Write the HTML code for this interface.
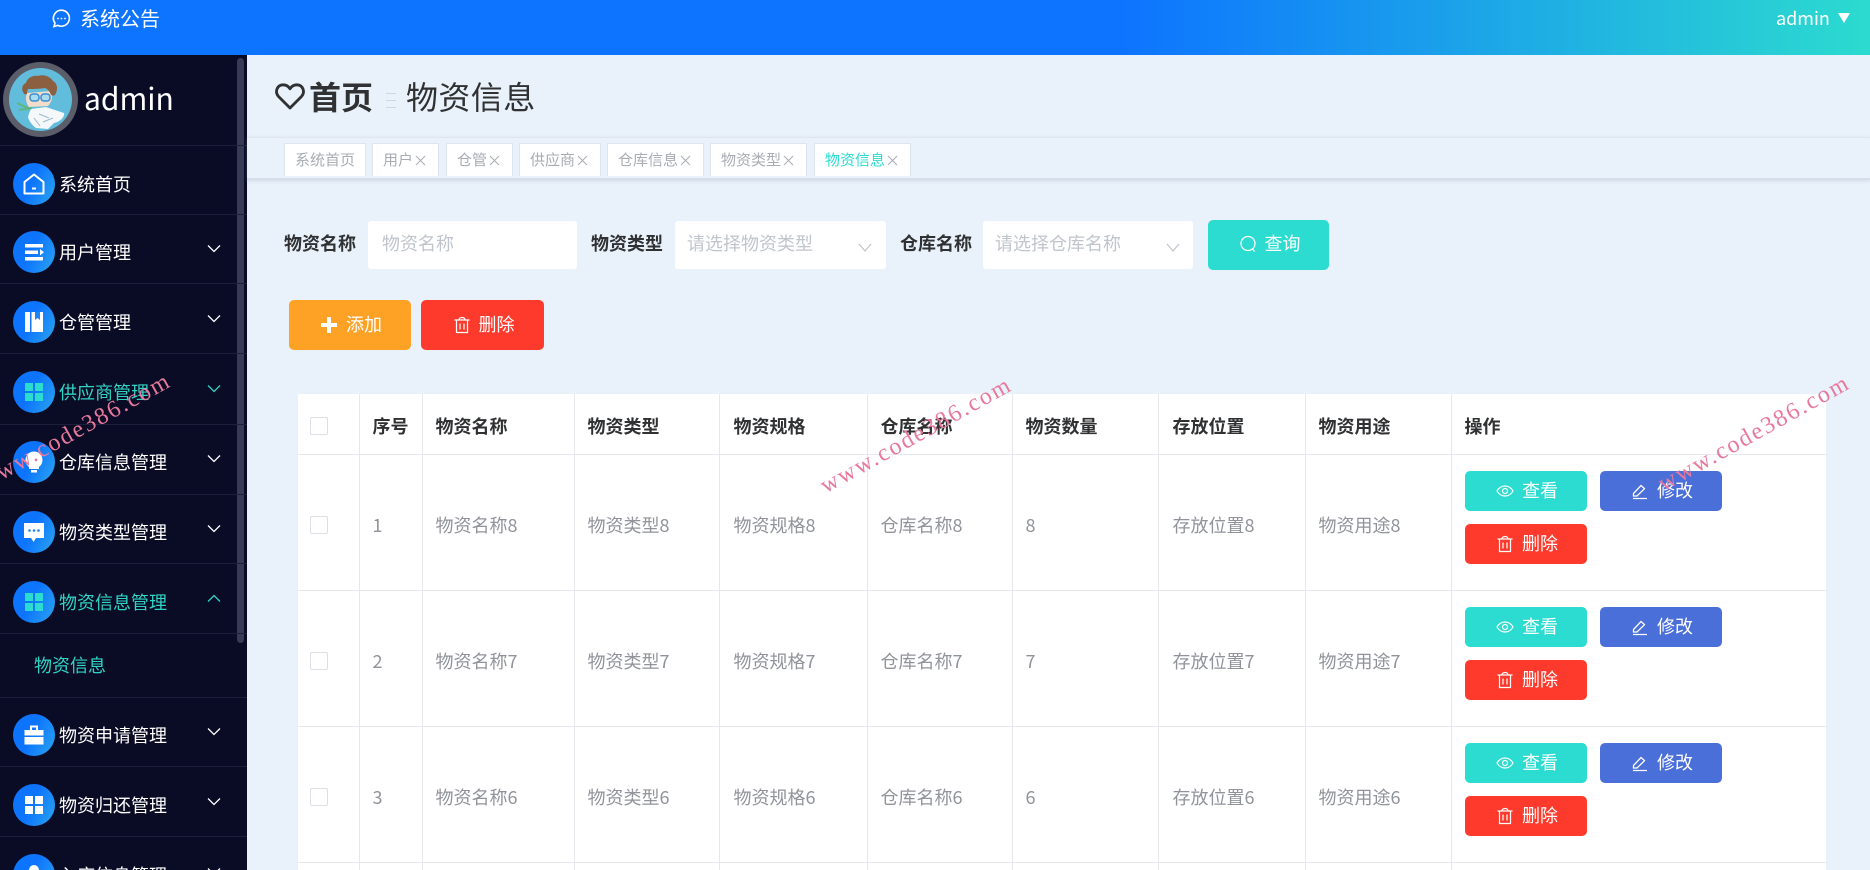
<!DOCTYPE html>
<html lang="zh"><head><meta charset="utf-8"><title>物资信息</title>
<style>
*{box-sizing:border-box}
html,body{margin:0;padding:0;width:1870px;height:870px;overflow:hidden;background:#e9f1fa;font-family:"Noto Sans CJK SC","Liberation Sans",sans-serif}
#page{position:absolute;left:0;top:0;width:1870px;height:870px;overflow:hidden;background:#e9f1fa}
.t{position:absolute;white-space:nowrap;line-height:1}
.a{position:absolute}
#hd{position:absolute;left:0;top:0;width:1870px;height:55px;background:linear-gradient(90deg,#0d74ff 60%,#2cdbcf 100%)}
#sb{position:absolute;left:0;top:55px;width:247px;height:815px;background:#0a0c26;overflow:hidden}
.dv{position:absolute;left:0;width:247px;height:1px;background:#1d1f3c}
.ic{position:absolute;left:13px;width:42px;height:42px;border-radius:50%;background:linear-gradient(115deg,#0d74ff 45%,#2ba6ee 100%)}
.ic svg{position:absolute;left:9px;top:9px;width:24px;height:24px}
.ml{position:absolute;left:59px;font-size:18px;line-height:24px;color:#fff;white-space:nowrap}
.ch{position:absolute;left:207px;width:14px;height:9px}
.on{color:#2fd4c4}
.tag{position:absolute;top:143px;height:33px;background:#fff;border:1px solid #dfe5ee;border-bottom:none;font-size:15px;line-height:31px;color:#a9adb3;padding-left:10px;white-space:nowrap}
.tag svg{display:inline-block;width:11px;height:11px;margin-left:2px;vertical-align:-1px;fill:none;stroke:#a9adb3;stroke-width:1}
.lb{position:absolute;font-size:18px;font-weight:700;line-height:24px;color:#303133;white-space:nowrap}
.in{position:absolute;background:#fff;height:48px;border-radius:3px;font-size:18px;line-height:44px;color:#c0c4cc;white-space:nowrap}
.btn{position:absolute;display:flex;align-items:center;justify-content:center;color:#fff;font-size:18px;border-radius:5px;white-space:nowrap;padding-left:2px}
.btn span{margin-left:8px;position:relative;top:-1px}
.btn svg{width:18px;height:18px;display:block}
.g{background:#2cdcd0}.b{background:#4a6fd8}.r{background:#fe3a2c}.o{background:#fea226}
table{position:absolute;left:298px;top:394px;width:1528px;border-collapse:collapse;table-layout:fixed;background:#fff}
th,td{border:1px solid #e6e8ee;padding:0 13px;font-size:18px;text-align:left;white-space:nowrap;overflow:hidden}
table tr>*:first-child{border-left:none;padding-left:12px}
table tr>*:last-child{border-right:none}
table tr>*:nth-child(5),table tr>*:nth-child(8){padding-left:14px}
tr:first-child th{border-top:none}
th{height:60px;color:#303133;font-weight:700;padding-top:4px}
td{height:136px;color:#909399;padding-top:5px}
tr.last td{height:8px;padding:0;border-bottom:none;font-size:0;line-height:0}
.cb{display:block;width:18px;height:18px;border:1px solid #dcdfe6;background:#fff;border-radius:2px}
.wm{position:absolute;font-family:"Liberation Serif",serif;font-size:24px;letter-spacing:2px;color:#e7799d;line-height:1;white-space:nowrap;transform:rotate(-29deg);transform-origin:0 100%}
</style></head><body><div id="page">

<div id="hd">
<svg class="a" style="left:52px;top:9px" width="19" height="19" viewBox="0 0 19 19" fill="none" stroke="#fff" stroke-width="1.6"><path d="M9.5 1.2a8 8 0 1 1-3.6 15.2L2 17.6l1-3.6A8 8 0 0 1 9.500 1.200z"/><circle cx="6" cy="9.500" r=".9" fill="#fff" stroke="none"/><circle cx="9.500" cy="9.500" r=".9" fill="#fff" stroke="none"/><circle cx="13" cy="9.500" r=".9" fill="#fff" stroke="none"/></svg>
<div class="t" style="left:80px;top:8px;font-size:20px;color:#fff;line-height:20px">系统公告</div>
<div class="t" style="left:1776px;top:9px;font-size:18px;color:#fff;line-height:18px">admin</div>
<svg class="a" style="left:1838px;top:13px" width="12" height="10" viewBox="0 0 12 10"><path d="M0 0h12L6 10z" fill="#fff"/></svg>
</div>

<div id="sb">
<div class="a" style="left:237px;top:3px;width:7px;height:585px;background:#393a55;border-radius:4px"></div>
<svg class="a" style="left:3px;top:7px" width="75" height="75" viewBox="0 0 75 75">
<circle cx="37.500" cy="37.500" r="37.500" fill="#5b5d68"/><circle cx="37.500" cy="37.500" r="31.500" fill="#62bcdc"/>
<path d="M26 45c-3-4-4-9-2-14l24-2c2 5 1 11-3 15z" fill="#f3dcc9"/>
<path d="M20 30c-2-4 0-8 3-9 1-5 7-8 12-7 5-2 12 0 15 5 4 2 5 7 3 12-1 3-3 3-5 2-1-3-3-6-6-7-6 1-13 1-17 1-1 2-1 4-1 5-2 1-3 0-4-2z" fill="#8b5f3f"/>
<rect x="27" y="32" width="9" height="7" rx="3" fill="#a8dcf2" stroke="#3b8fd0" stroke-width="1.500"/><rect x="38" y="32" width="9" height="7" rx="3" fill="#a8dcf2" stroke="#3b8fd0" stroke-width="1.500"/>
<path d="M28 47l15-2 18 6c1 4-4 9-10 10l-6 6-12-1c-4-3-7-7-8-11 1-4 2-6 3-8z" fill="#f4f8fa"/>
<path d="M36 52l10 4M40 60l10-4M31 56l6 8" stroke="#9fb9c8" stroke-width="1"/>
<path d="M14 41l13 6M16 48l13-2" stroke="#5fb87a" stroke-width="2"/>
</svg>
<div class="t" style="left:84px;top:24px;font-size:30px;color:#fff;line-height:36px">admin</div>
<div class="dv" style="top:90px"></div>

<div class="ic" style="top:108px"><svg viewBox="0 0 24 24" fill="none" stroke="#fff" stroke-width="2"><path d="M12 2.500 21.500 10v11.500h-19V10z" stroke-linejoin="round"/><path d="M10 16.500h4"/></svg></div>
<div class="ml" style="top:117px">系统首页</div>
<div class="dv" style="top:159px"></div>

<div class="ic" style="top:176px"><svg viewBox="0 0 24 24" fill="#fff"><rect x="3" y="4" width="18" height="3.500"/><rect x="3" y="10.500" width="13" height="3.500"/><rect x="3" y="17" width="18" height="3.500"/><path d="M18 9l4 3.200-4 3.200z"/></svg></div>
<div class="ml" style="top:185px">用户管理</div>
<svg class="ch" style="top:189px" viewBox="0 0 14 9" fill="none" stroke="#fff" stroke-width="1.300"><path d="M1 1.500l6 6 6-6"/></svg>
<div class="dv" style="top:228px"></div>

<div class="ic" style="top:246px"><svg viewBox="0 0 24 24" fill="#fff"><path d="M3 2h5v20H3zM9.500 2H21v20H9.500z"/><path d="M13 2h5v8l-2.500-2L13 10z" fill="#1b84fa"/></svg></div>
<div class="ml" style="top:255px">仓管管理</div>
<svg class="ch" style="top:259px" viewBox="0 0 14 9" fill="none" stroke="#fff" stroke-width="1.300"><path d="M1 1.500l6 6 6-6"/></svg>
<div class="dv" style="top:298px"></div>

<div class="ic" style="top:316px"><svg viewBox="0 0 24 24" fill="#2cdcd0"><rect x="3" y="3" width="8" height="8"/><rect x="13" y="3" width="8" height="8"/><rect x="3" y="13" width="8" height="8"/><rect x="13" y="13" width="8" height="8"/></svg></div>
<div class="ml on" style="top:325px">供应商管理</div>
<svg class="ch" style="top:329px" viewBox="0 0 14 9" fill="none" stroke="#2fd4c4" stroke-width="1.300"><path d="M1 1.500l6 6 6-6"/></svg>
<div class="dv" style="top:369px"></div>

<div class="ic" style="top:386px"><svg viewBox="0 0 24 24" fill="#fff"><path d="M12 1.500a8.500 8.500 0 0 1 5 15.400V19H7v-2.100A8.500 8.500 0 0 1 12 1.500z"/><rect x="9" y="20" width="6" height="2.500"/></svg></div>
<div class="ml" style="top:395px">仓库信息管理</div>
<svg class="ch" style="top:399px" viewBox="0 0 14 9" fill="none" stroke="#fff" stroke-width="1.300"><path d="M1 1.500l6 6 6-6"/></svg>
<div class="dv" style="top:439px"></div>

<div class="ic" style="top:456px"><svg viewBox="0 0 24 24"><path d="M2 3h20v15h-8l-2.500 4-2.500-4H2z" fill="#fff"/><circle cx="7.500" cy="10.500" r="1.300" fill="#1b84fa"/><circle cx="12" cy="10.500" r="1.300" fill="#1b84fa"/><circle cx="16.500" cy="10.500" r="1.300" fill="#1b84fa"/></svg></div>
<div class="ml" style="top:465px">物资类型管理</div>
<svg class="ch" style="top:469px" viewBox="0 0 14 9" fill="none" stroke="#fff" stroke-width="1.300"><path d="M1 1.500l6 6 6-6"/></svg>
<div class="dv" style="top:508px"></div>

<div class="ic" style="top:526px"><svg viewBox="0 0 24 24" fill="#2cdcd0"><rect x="3" y="3" width="8" height="8"/><rect x="13" y="3" width="8" height="8"/><rect x="3" y="13" width="8" height="8"/><rect x="13" y="13" width="8" height="8"/></svg></div>
<div class="ml on" style="top:535px">物资信息管理</div>
<svg class="ch" style="top:539px" viewBox="0 0 14 9" fill="none" stroke="#2fd4c4" stroke-width="1.300"><path d="M1 7.500l6-6 6 6"/></svg>
<div class="dv" style="top:578px"></div>
<div class="ml on" style="left:34px;top:598px">物资信息</div>
<div class="dv" style="top:642px"></div>

<div class="ic" style="top:659px"><svg viewBox="0 0 24 24" fill="#fff"><path d="M8 2.500h8V7h-2V4.500h-4V7H8z"/><path d="M2.500 7h19v5.500h-19zM2.500 14h19v7.500h-19z"/></svg></div>
<div class="ml" style="top:668px">物资申请管理</div>
<svg class="ch" style="top:672px" viewBox="0 0 14 9" fill="none" stroke="#fff" stroke-width="1.300"><path d="M1 1.500l6 6 6-6"/></svg>
<div class="dv" style="top:711px"></div>

<div class="ic" style="top:729px"><svg viewBox="0 0 24 24" fill="#fff"><rect x="3" y="3" width="8" height="8"/><rect x="13" y="3" width="8" height="8"/><rect x="3" y="13" width="8" height="8"/><rect x="13" y="13" width="8" height="8"/></svg></div>
<div class="ml" style="top:738px">物资归还管理</div>
<svg class="ch" style="top:742px" viewBox="0 0 14 9" fill="none" stroke="#fff" stroke-width="1.300"><path d="M1 1.500l6 6 6-6"/></svg>
<div class="dv" style="top:781px"></div>

<div class="ic" style="top:799px"><svg viewBox="0 0 24 24" fill="#fff"><circle cx="12" cy="7" r="5"/><path d="M3 22c0-6 4-8 9-8s9 2 9 8z"/></svg></div>
<div class="ml" style="top:808px">入库信息管理</div>
<svg class="ch" style="top:812px" viewBox="0 0 14 9" fill="none" stroke="#fff" stroke-width="1.300"><path d="M1 1.500l6 6 6-6"/></svg>
</div>

<!-- content -->
<svg class="a" style="left:275px;top:83px" width="30" height="27" viewBox="0 0 30 27" fill="none" stroke="#303133" stroke-width="2.800"><path d="M15 25 3.500 13.500C-.5 9 2 2 8 1.800c3 0 5.500 1.500 7 4 1.500-2.500 4-4 7-4C28 2 30.500 9 26.500 13.500z" stroke-linejoin="round"/></svg>
<div class="t" style="left:309px;top:78px;font-size:32px;font-weight:700;color:#303133;line-height:36px">首页</div>
<div class="a" style="left:386px;top:93px;width:10px;height:1px;background:#cfd6df"></div>
<div class="a" style="left:386px;top:100px;width:10px;height:1px;background:#cfd6df"></div>
<div class="a" style="left:386px;top:107px;width:10px;height:1px;background:#cfd6df"></div>
<div class="t" style="left:406px;top:78px;font-size:32px;color:#303133;line-height:36px;letter-spacing:.4px">物资信息</div>

<div class="a" style="left:247px;top:137px;width:1623px;height:43px;border-top:1px solid #dfe6ef;border-bottom:2px solid #d6dee9;box-shadow:0 1px 3px rgba(150,165,190,.3)"></div>
<div class="tag" style="left:284px;width:82px">系统首页</div>
<div class="tag" style="left:372px;width:67px">用户<svg viewBox="0 0 11 11"><path d="M1 1l9 9M10 1l-9 9"/></svg></div>
<div class="tag" style="left:446px;width:67px">仓管<svg viewBox="0 0 11 11"><path d="M1 1l9 9M10 1l-9 9"/></svg></div>
<div class="tag" style="left:519px;width:82px">供应商<svg viewBox="0 0 11 11"><path d="M1 1l9 9M10 1l-9 9"/></svg></div>
<div class="tag" style="left:607px;width:97px">仓库信息<svg viewBox="0 0 11 11"><path d="M1 1l9 9M10 1l-9 9"/></svg></div>
<div class="tag" style="left:710px;width:97px">物资类型<svg viewBox="0 0 11 11"><path d="M1 1l9 9M10 1l-9 9"/></svg></div>
<div class="tag" style="left:814px;width:97px"><span style="color:#2cdcd0">物资信息</span><svg viewBox="0 0 11 11"><path d="M1 1l9 9M10 1l-9 9"/></svg></div>

<div class="lb" style="left:284px;top:231px">物资名称</div>
<div class="in" style="left:368px;top:221px;width:209px;padding-left:14px">物资名称</div>
<div class="lb" style="left:591px;top:231px">物资类型</div>
<div class="in" style="left:675px;top:221px;width:211px;padding-left:12px">请选择物资类型</div>
<svg class="a" style="left:858px;top:243px" width="14" height="9" viewBox="0 0 14 9" fill="none" stroke="#c0c4cc" stroke-width="1.200"><path d="M1 1l6 7 6-7"/></svg>
<div class="lb" style="left:900px;top:231px">仓库名称</div>
<div class="in" style="left:983px;top:221px;width:210px;padding-left:12px">请选择仓库名称</div>
<svg class="a" style="left:1166px;top:243px" width="14" height="9" viewBox="0 0 14 9" fill="none" stroke="#c0c4cc" stroke-width="1.200"><path d="M1 1l6 7 6-7"/></svg>
<div class="btn g" style="left:1208px;top:220px;width:121px;height:50px"><svg style="margin-top:-3px" viewBox="0 0 18 18" fill="none" stroke="#fff" stroke-width="1.300"><circle cx="9" cy="8.500" r="7"/><path d="M13.500 14l2 2.500"/></svg><span style="top:-2px">查询</span></div>
<div class="btn o" style="left:289px;top:300px;width:122px;height:50px"><svg viewBox="0 0 18 18" fill="#fff"><path d="M7 1h4v6h6v4h-6v6H7v-6H1V7h6z"/></svg><span>添加</span></div>
<div class="btn r" style="left:421px;top:300px;width:123px;height:50px"><svg viewBox="0 0 18 18" fill="none" stroke="#fff" stroke-width="1.200"><path d="M1.500 4h15M6 4c0-1.600 1-2.500 3-2.500S12 2.400 12 4M3.500 4v12.500h11V4M7 7.500v6M11 7.500v6"/></svg><span>删除</span></div>

<table>
<colgroup><col style="width:61px"><col style="width:63px"><col style="width:152px"><col style="width:145px"><col style="width:148px"><col style="width:145px"><col style="width:146px"><col style="width:147px"><col style="width:146px"><col></colgroup>
<tr><th><span class="cb"></span></th><th>序号</th><th>物资名称</th><th>物资类型</th><th>物资规格</th><th>仓库名称</th><th>物资数量</th><th>存放位置</th><th>物资用途</th><th>操作</th></tr>
<tr><td><span class="cb"></span></td><td>1</td><td>物资名称8</td><td>物资类型8</td><td>物资规格8</td><td>仓库名称8</td><td>8</td><td>存放位置8</td><td>物资用途8</td><td></td></tr>
<tr><td><span class="cb"></span></td><td>2</td><td>物资名称7</td><td>物资类型7</td><td>物资规格7</td><td>仓库名称7</td><td>7</td><td>存放位置7</td><td>物资用途7</td><td></td></tr>
<tr><td><span class="cb"></span></td><td>3</td><td>物资名称6</td><td>物资类型6</td><td>物资规格6</td><td>仓库名称6</td><td>6</td><td>存放位置6</td><td>物资用途6</td><td></td></tr>
<tr class="last"><td></td><td></td><td></td><td></td><td></td><td></td><td></td><td></td><td></td><td></td></tr>
</table>

<div class="btn g" style="left:1465px;top:471px;width:122px;height:40px"><svg viewBox="0 0 18 18" fill="none" stroke="#fff" stroke-width="1.200"><path d="M1 9c2-3.500 5-5 8-5s6 1.500 8 5c-2 3.500-5 5-8 5s-6-1.500-8-5z"/><circle cx="9" cy="9" r="2.500"/></svg><span>查看</span></div>
<div class="btn b" style="left:1600px;top:471px;width:122px;height:40px"><svg viewBox="0 0 18 18" fill="none" stroke="#fff" stroke-width="1.300"><path d="M2.500 11.500 10 3.500l3.500 3.200L6 14H2.500zM2 16.500h14"/></svg><span>修改</span></div>
<div class="btn r" style="left:1465px;top:524px;width:122px;height:40px"><svg viewBox="0 0 18 18" fill="none" stroke="#fff" stroke-width="1.200"><path d="M1.500 4h15M6 4c0-1.600 1-2.500 3-2.500S12 2.400 12 4M3.500 4v12.500h11V4M7 7.500v6M11 7.500v6"/></svg><span>删除</span></div>

<div class="btn g" style="left:1465px;top:607px;width:122px;height:40px"><svg viewBox="0 0 18 18" fill="none" stroke="#fff" stroke-width="1.200"><path d="M1 9c2-3.500 5-5 8-5s6 1.500 8 5c-2 3.500-5 5-8 5s-6-1.500-8-5z"/><circle cx="9" cy="9" r="2.500"/></svg><span>查看</span></div>
<div class="btn b" style="left:1600px;top:607px;width:122px;height:40px"><svg viewBox="0 0 18 18" fill="none" stroke="#fff" stroke-width="1.300"><path d="M2.500 11.500 10 3.500l3.500 3.200L6 14H2.500zM2 16.500h14"/></svg><span>修改</span></div>
<div class="btn r" style="left:1465px;top:660px;width:122px;height:40px"><svg viewBox="0 0 18 18" fill="none" stroke="#fff" stroke-width="1.200"><path d="M1.500 4h15M6 4c0-1.600 1-2.500 3-2.500S12 2.400 12 4M3.500 4v12.500h11V4M7 7.500v6M11 7.500v6"/></svg><span>删除</span></div>

<div class="btn g" style="left:1465px;top:743px;width:122px;height:40px"><svg viewBox="0 0 18 18" fill="none" stroke="#fff" stroke-width="1.200"><path d="M1 9c2-3.500 5-5 8-5s6 1.500 8 5c-2 3.500-5 5-8 5s-6-1.500-8-5z"/><circle cx="9" cy="9" r="2.500"/></svg><span>查看</span></div>
<div class="btn b" style="left:1600px;top:743px;width:122px;height:40px"><svg viewBox="0 0 18 18" fill="none" stroke="#fff" stroke-width="1.300"><path d="M2.500 11.500 10 3.500l3.500 3.200L6 14H2.500zM2 16.500h14"/></svg><span>修改</span></div>
<div class="btn r" style="left:1465px;top:796px;width:122px;height:40px"><svg viewBox="0 0 18 18" fill="none" stroke="#fff" stroke-width="1.200"><path d="M1.500 4h15M6 4c0-1.600 1-2.500 3-2.500S12 2.400 12 4M3.500 4v12.500h11V4M7 7.500v6M11 7.500v6"/></svg><span>删除</span></div>

<div class="wm" style="left:-13px;top:470px">www.code386.com</div>
<div class="wm" style="left:828px;top:474px">www.code386.com</div>
<div class="wm" style="left:1666px;top:472px">www.code386.com</div>
</div></body></html>
